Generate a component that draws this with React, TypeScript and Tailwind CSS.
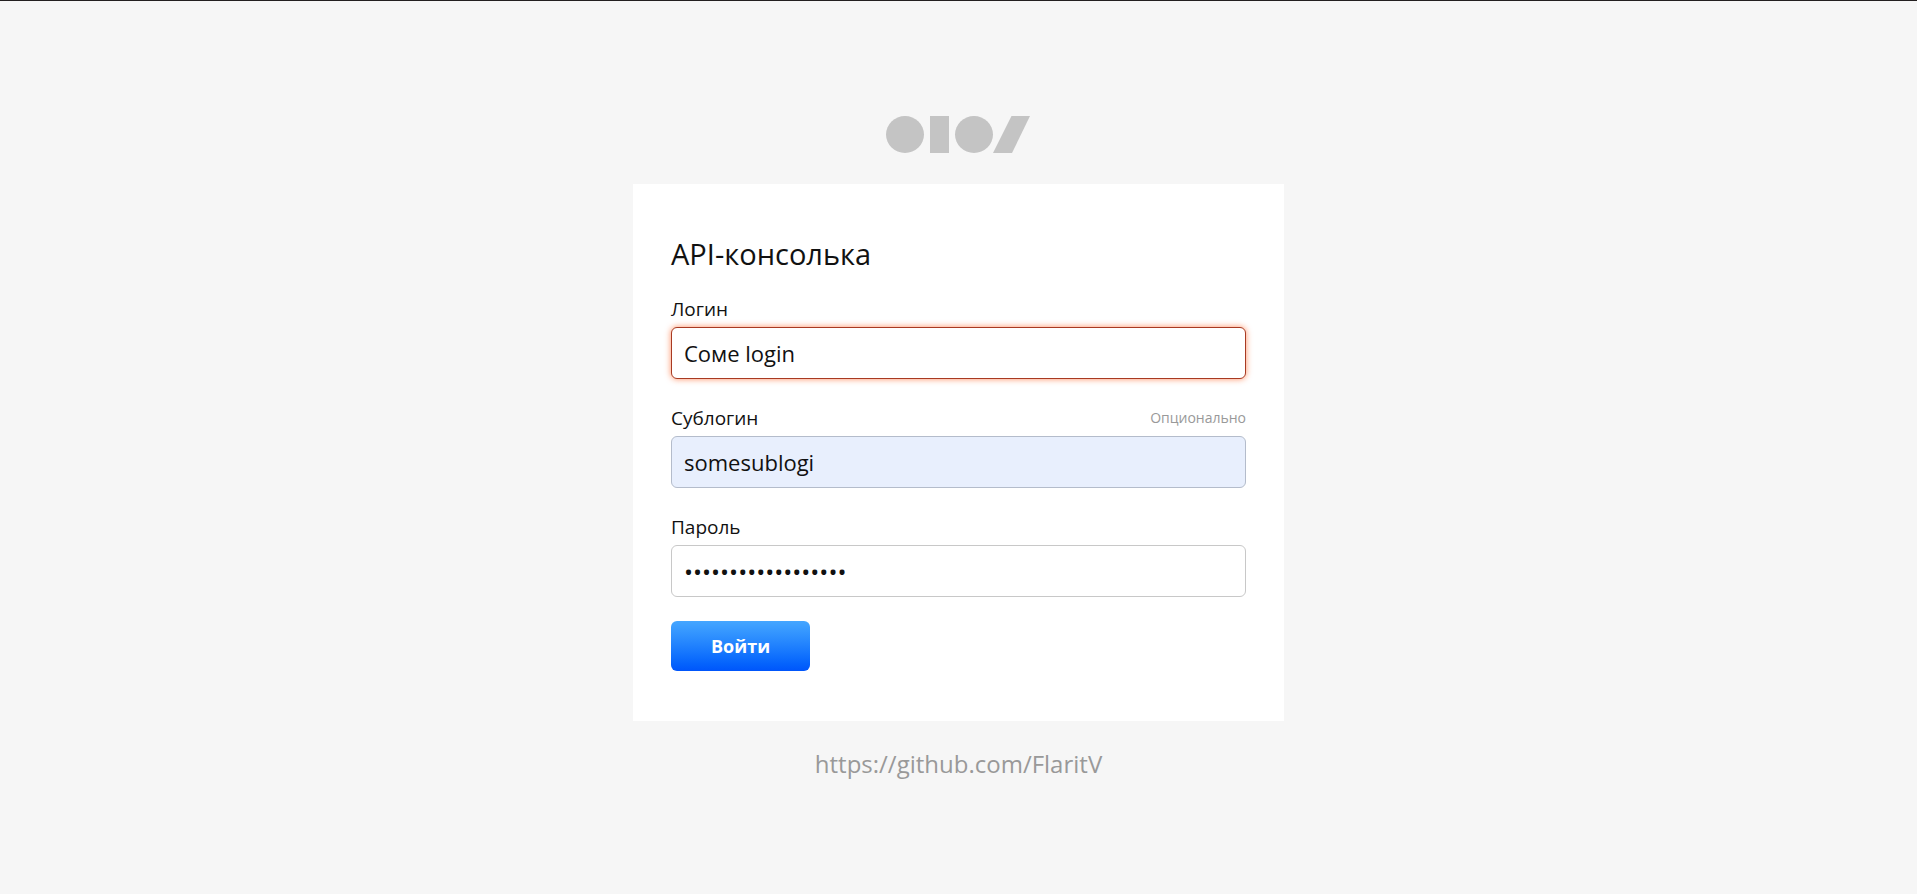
import { useState } from "react";

const inputBase =
  "h-[52px] w-full rounded-md border px-3 text-[#111] outline-none";

function Logo() {
  return (
    <svg
      viewBox="0 0 145 37"
      className="h-[37px] w-[145px] fill-[#c4c4c4]"
      aria-hidden="true"
    >
      <ellipse cx="19" cy="18.5" rx="19" ry="18.5" />
      <rect x="44" y="0" width="19" height="37" />
      <ellipse cx="88" cy="18.5" rx="19" ry="18.5" />
      <polygon points="125.500,0 144,0 126,37 107,37" />
    </svg>
  );
}

export default function App() {
  const [login, setLogin] = useState("Соме login");
  const [sublogin, setSublogin] = useState("somesublogi");
  const [password, setPassword] = useState("passwordpassword12");

  return (
    <main className="flex min-h-screen flex-col items-center border-t border-[#231f20] bg-[#f6f6f6] px-4 pt-[115px] pb-16 font-['Open_Sans','Noto_Sans',sans-serif] text-[#111]">
      <Logo />
      <form
        className="mt-[31px] flex w-full max-w-[651px] flex-col bg-white px-[38px] py-[50px]"
        onSubmit={(e) => e.preventDefault()}
      >
        <h1 className="mb-6 text-[29px] leading-[39px]">API-консолька</h1>

        <div className="flex flex-col gap-[27px]">
          <div className="flex flex-col gap-1.5">
            <label htmlFor="login" className="text-[19px] leading-6">
              Логин
            </label>
            <input
              id="login"
              type="text"
              value={login}
              onChange={(e) => setLogin(e.target.value)}
              className={`${inputBase} border-[#a83a22] bg-white text-[22px] shadow-[0_0_6px_rgba(255,80,10,0.65)]`}
            />
          </div>

          <div className="flex flex-col gap-1.5">
            <div className="flex items-center justify-between leading-6">
              <label htmlFor="sublogin" className="text-[19px]">
                Сублогин
              </label>
              <span className="text-[14px] text-[#999]">Опционально</span>
            </div>
            <input
              id="sublogin"
              type="text"
              value={sublogin}
              onChange={(e) => setSublogin(e.target.value)}
              className={`${inputBase} border-[#b4bccb] bg-[#e8effd] text-[22px]`}
            />
          </div>

          <div className="flex flex-col gap-1.5">
            <label htmlFor="password" className="text-[19px] leading-6">
              Пароль
            </label>
            <input
              id="password"
              type="password"
              value={password}
              onChange={(e) => setPassword(e.target.value)}
              className={`${inputBase} border-[#c8c8c8] bg-white text-[24px]`}
            />
          </div>
        </div>

        <button
          type="submit"
          className="mt-6 h-[50px] self-start rounded-md bg-linear-to-b from-[#45a6ff] to-[#0055fb] px-10 text-[18px] font-bold text-white"
        >
          Войти
        </button>
      </form>
      <a
        href="https://github.com/FlaritV"
        className="mt-6 text-[24px] leading-[38px] text-[#999]"
      >
        https://github.com/FlaritV
      </a>
    </main>
  );
}
